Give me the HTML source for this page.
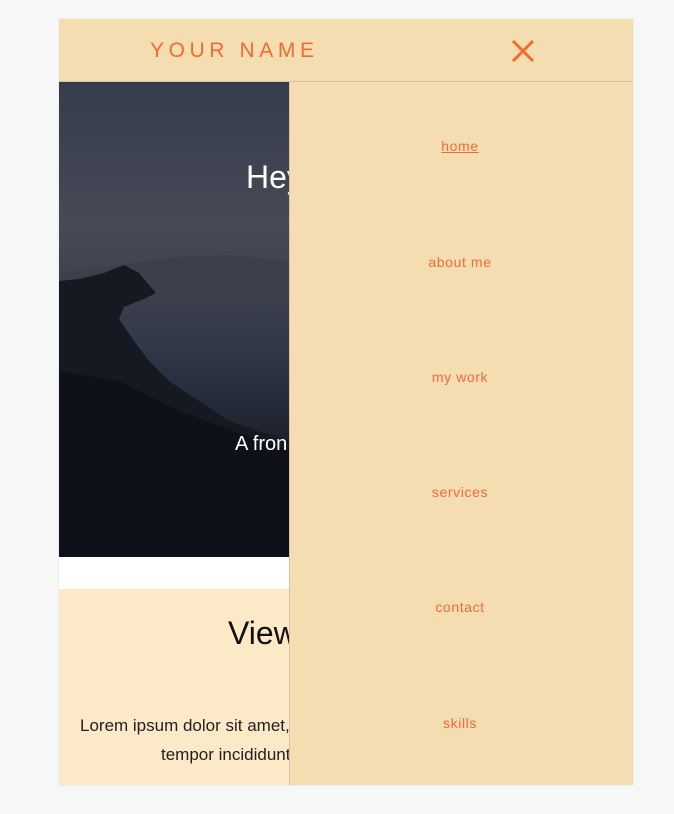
<!DOCTYPE html><html><head><style>
body{margin:0;background:#f6f7f7;width:674px;height:814px;overflow:hidden;font-family:"Liberation Sans",sans-serif;position:relative}
.f{position:absolute;left:59px;top:19px;width:574px;height:766px;overflow:hidden;background:#fff;box-shadow:0 0 1px #ccc}
.hd{position:absolute;left:0;top:0;width:574px;height:62px;background:#f5ddb2;border-bottom:1px solid #d8c29d}
.name{position:absolute;left:91px;top:20px;color:#f26b2f;font-size:21px;letter-spacing:4.6px}
.x{position:absolute;left:452px;top:20px}
.hero{position:absolute;left:0;top:62px;width:230px;height:476px;overflow:hidden;background:linear-gradient(180deg,#353c4c 0%,#474a56 30%,#40434f 42%,#2c3444 60%,#1a1e28 78%,#0b0e18 100%)}
.mtn{position:absolute;left:0;top:170px}
.hero .t1{position:absolute;left:187px;top:78px;color:#fff;font-size:32px}
.hero .t2{position:absolute;left:176px;top:352px;color:#fff;font-size:20px}
.sec{position:absolute;left:0;top:570px;width:230px;height:196px;background:#fce9c8}
.sec .v{position:absolute;left:169px;top:26px;font-size:32px;color:#111}
.sec p{position:absolute;margin:0;left:21px;top:122px;width:300px;font-size:17px;color:#222;line-height:29px;white-space:nowrap}
.menu{position:absolute;left:230px;top:63px;width:344px;height:703px;background:#f5ddb2;border-left:1px solid #d9c39c}
.menu a{position:absolute;left:-2px;width:344px;text-align:center;color:#ef6a3c;font-size:14px;letter-spacing:.6px;text-decoration:none}
</style></head><body><div class="f">
<div class="hero"><svg class="mtn" width="230" height="306"><path d="M0 22 L60 14 L120 6 L170 4 L230 10 L230 40 L0 40Z" fill="#3c404c"/>
<path d="M0 30 L20 28 L45 22 L65 14 L80 22 L97 42 L85 48 L65 56 L60 68 L75 90 L90 110 L110 130 L140 150 L170 170 L230 190 L230 306 L0 306Z" fill="#151922"/>
<path d="M0 120 L60 130 L120 160 L230 200 L230 306 L0 306Z" fill="#0e1119"/></svg>
<div class="t1">Hey</div><div class="t2">A fron</div></div>
<div class="sec"><div class="v">View</div><p>Lorem ipsum dolor sit amet,<br><span style="padding-left:81px">tempor incididunt</span></p></div>
<div class="hd"><div class="name">YOUR NAME</div><svg class="x" width="24" height="24"><path d="M2 2L22 22M22 2L2 22" stroke="#f26b2f" stroke-width="3"/></svg></div>
<div class="menu">
<a style="top:56px;text-decoration:underline">home</a>
<a style="top:172px">about me</a>
<a style="top:287px">my work</a>
<a style="top:402px">services</a>
<a style="top:517px">contact</a>
<a style="top:633px">skills</a>
</div></div></body></html>
